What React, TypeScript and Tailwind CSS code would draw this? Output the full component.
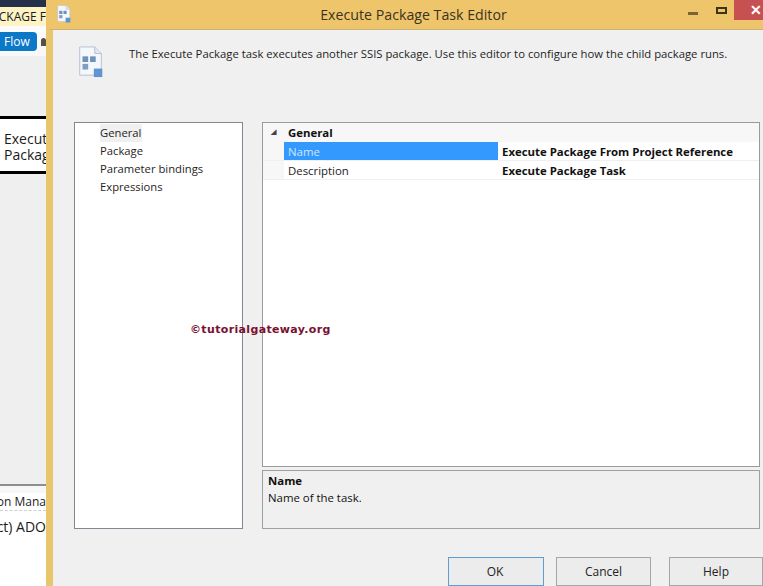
const font = "[font-family:'Open_Sans','Noto_Sans',sans-serif]";

function PackageIcon({ size }: { size: number }) {
  return (
    <svg width={size} height={size} viewBox="0 0 26 34" fill="none">
      <path d="M1 1h16l7 7v23H1z" fill="#f4f7fb" stroke="#b4bfcd" />
      <path d="M17 1v7h7" fill="#dfe6ee" stroke="#b4bfcd" />
      <rect x="4" y="11" width="6" height="6" fill="#6f93b8" />
      <rect x="12" y="11" width="6" height="6" fill="#6f93b8" />
      <rect x="4" y="19" width="6" height="6" fill="#7f9fc0" />
      <rect x="16" y="24" width="9" height="9" fill="#5f93d3" />
    </svg>
  );
}

function BackgroundDesigner() {
  return (
    <div className={`w-[46px] shrink-0 h-full flex flex-col overflow-hidden bg-[#efefef] text-[#1b1b1b] ${font}`}>
      <div className="h-[7px] shrink-0 bg-[#25304b]" />
      <div className="h-[19px] shrink-0 bg-[#fdf3c4] flex justify-end overflow-hidden whitespace-nowrap text-[12px] leading-[19px]">
        <span>CKAGE F</span>
      </div>
      <div className="h-[6px] shrink-0 bg-[#fbfbfb]" />
      <div className="h-[19px] shrink-0 flex items-center bg-[#f8f8f8]">
        <div className="w-[37px] h-full bg-[#0b78c8] rounded-r-sm text-white text-[12px] leading-[19px] pl-[4px]">Flow</div>
        <div className="ml-[4px] w-[5px] h-[8px] bg-[#5a5040] rounded-t-sm" />
      </div>
      <div className="h-[5px] shrink-0 bg-[#f8f8f8]" />
      <div className="h-[58px] shrink-0 mt-[60px] bg-white border-y-[3px] border-black overflow-hidden flex flex-col justify-center pl-[4px] pt-[4px] text-[14px] leading-[16px] whitespace-nowrap">
        <span>Execute</span>
        <span>Package</span>
      </div>
      <div className="flex-1 min-h-0 bg-[#efefef]" />
      <div className="h-[9px] shrink-0 border-t-2 border-[#8e8e8e] bg-[#f7f7f7]" />
      <div className="h-[18px] shrink-0 bg-white border-b border-dashed border-[#cfcfcf] flex justify-end overflow-hidden whitespace-nowrap text-[12px] leading-[18px]">
        <span>on Mana</span>
      </div>
      <div className="h-[75px] shrink-0 bg-white flex justify-end overflow-hidden whitespace-nowrap text-[14px] leading-[32px]">
        <span>ct) ADO</span>
      </div>
    </div>
  );
}

function TitleBar() {
  return (
    <div className="relative h-[29px] shrink-0 bg-[#efc56c] flex items-center">
      <div className="ml-[9px] -mt-[2px]">
        <PackageIcon size={18} />
      </div>
      <div className="flex-1 text-center text-[14.2px] text-[#3a3320] pl-[66px] pt-[1px]">Execute Package Task Editor</div>
      <div className="flex items-start self-start">
        <div className="w-[10px] h-[3px] bg-[#7a6430] mt-[12px]" />
        <div className="w-[11px] h-[7px] border-2 border-[#3d3418] mt-[7px] ml-[18px]" />
        <div className="w-[29px] h-[20px] ml-[7px] pr-[1px] bg-[#c75050] flex items-center justify-end text-white text-[14px] font-bold leading-none">✕</div>
      </div>
    </div>
  );
}

function TreeList() {
  const items = ["General", "Package", "Parameter bindings", "Expressions"];
  return (
    <div className="w-[169px] shrink-0 bg-white border border-[#828790] pt-[1px] pl-[25px] text-[11.25px] text-[#1e1e1e]">
      {items.map((item, i) => (
        <div key={item} className="h-[18px] leading-[18px]">
          <span className={i === 0 ? "bg-[#f0f0f0] inline-block pr-[1px]" : ""}>{item}</span>
        </div>
      ))}
    </div>
  );
}

function PropertyRow({ name, value, selected }: { name: string; value: string; selected?: boolean }) {
  return (
    <div className="h-[19px] flex border-b border-[#f0f0f0] text-[11.4px] leading-[20px]">
      <div className="w-[21px] shrink-0 bg-[#f7f7f7]" />
      <div className={`w-[214px] shrink-0 pl-[4px] ${selected ? "bg-[#3399ff] text-[#cfe6ff]" : "text-[#222]"}`}>{name}</div>
      <div className="flex-1 pl-[4px] font-bold text-[#111] whitespace-nowrap">{value}</div>
    </div>
  );
}

function PropertyGrid() {
  return (
    <div className="flex flex-col flex-1 min-w-0 gap-[3px] mr-[3px]">
      <div className="h-[345px] bg-white border border-[#9a9a9a]">
        <div className="h-[19px] bg-[#f7f7f7] flex items-center text-[11.4px] font-bold text-[#111]">
          <span className="w-[25px] pl-[8px] text-[7px] text-[#444]">◢</span>
          General
        </div>
        <PropertyRow name="Name" value="Execute Package From Project Reference" selected />
        <PropertyRow name="Description" value="Execute Package Task" />
      </div>
      <div className="flex-1 border border-[#a0a0a0] px-[5px] pt-[1px] text-[11.4px] leading-[17px] text-[#111]">
        <div className="font-bold">Name</div>
        <div>Name of the task.</div>
      </div>
    </div>
  );
}

function DialogButton({ label, primary }: { label: string; primary?: boolean }) {
  return (
    <div
      className={`h-[29px] flex items-center justify-center text-[12px] text-[#222] border ${
        primary ? "w-[96px] border-[#5f9ed1] bg-[#ececec] pr-[2px]" : "border-[#a6a6a6] bg-[#ececec]"
      }`}
    >
      {label}
    </div>
  );
}

export default function App() {
  return (
    <div className={`relative w-[763px] h-[586px] flex overflow-hidden bg-[#f0f0f0] ${font}`}>
      <BackgroundDesigner />
      <div className="flex-1 min-w-0 flex flex-col">
        <TitleBar />
        <div className="flex-1 min-h-0 flex flex-col border-l-[7px] border-l-[#e8c76c] border-t border-t-[#c9b27a] bg-[#f0f0f0]">
          <div className="h-[92px] shrink-0 flex">
            <div className="ml-[22px] mt-[16px]">
              <PackageIcon size={32} />
            </div>
            <div className="ml-[22px] mt-[15px] text-[11.3px] leading-[18px] text-[#1e1e1e] whitespace-nowrap">
              The Execute Package task executes another SSIS package. Use this editor to configure how the child package runs.
            </div>
          </div>
          <div className="h-[407px] shrink-0 flex pl-[21px] gap-[19px]">
            <TreeList />
            <PropertyGrid />
          </div>
          <div className="flex-1 flex pl-[395px] pt-[28px]">
            <DialogButton label="OK" primary />
            <div className="w-[95px] ml-[12px]">
              <DialogButton label="Cancel" />
            </div>
            <div className="w-[94px] ml-[18px]">
              <DialogButton label="Help" />
            </div>
          </div>
        </div>
      </div>
      <div className="absolute left-[190px] top-[323px] text-[11px] leading-[14px] font-bold tracking-[0.35px] text-[#7a1030] [font-family:'DejaVu_Sans',sans-serif]">
        ©tutorialgateway.org
      </div>
    </div>
  );
}
